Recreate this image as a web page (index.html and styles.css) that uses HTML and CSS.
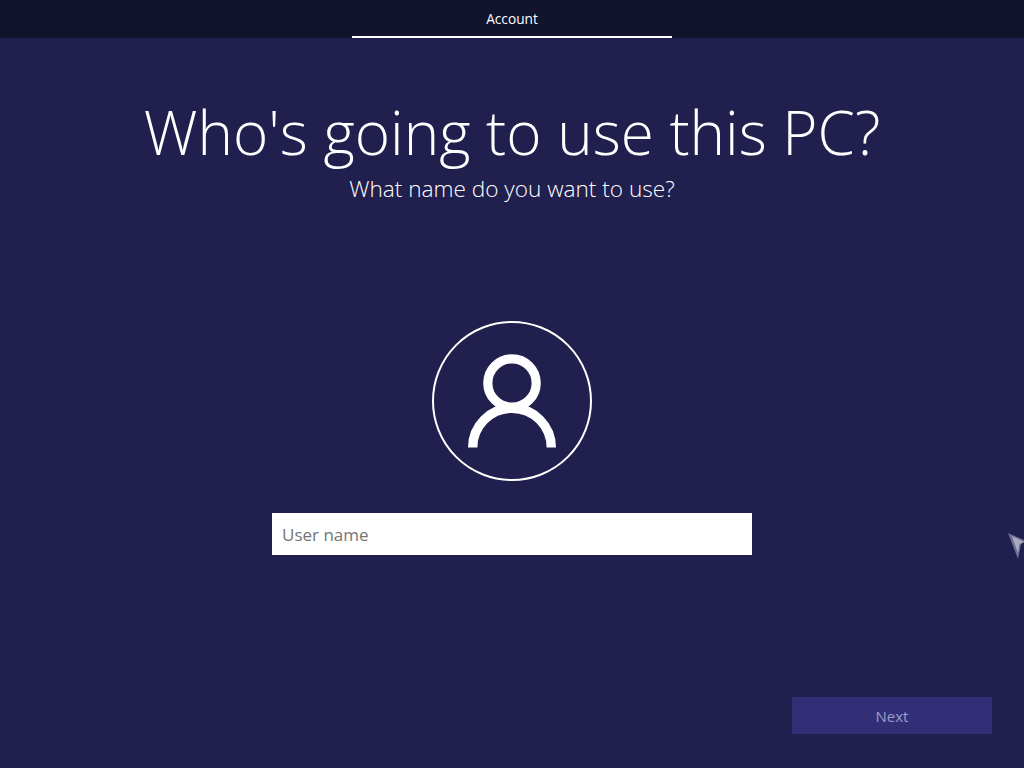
FILE: index.html
```html
<!DOCTYPE html>
<html lang="en">
<head>
<meta charset="utf-8">
<title>Account</title>
<link rel="stylesheet" href="styles.css">
</head>
<body>
<div class="screen">
  <header class="topbar"><div class="tab">Account</div></header>
  <main class="content">
    <h1 class="title">Who's going to use this PC?</h1>
    <p class="subtitle">What name do you want to use?</p>
    <div class="avatar">
      <svg class="avatar-icon" viewBox="0 0 160 160" width="160" height="160" fill="none" stroke="#fff">
        <circle cx="80" cy="80" r="79" stroke-width="2"/>
        <circle cx="80" cy="62" r="24.200" stroke-width="9.200"/>
        <path d="M40.700 126.500 A39.300 39.300 0 0 1 119.300 126.500" stroke-width="9.400"/>
      </svg>
    </div>
    <input class="name-input" type="text" placeholder="User name">
  </main>
  <footer class="actions"><button class="next" type="button">Next</button></footer>
  <svg class="cursor" viewBox="0 0 18 26" width="18" height="26">
    <path d="M0 0 L18 8 L13 11 L10 26 Z" fill="#6f7090"/>
    <path d="M4 3 L16 9 L11.500 11 L10 20 Z" fill="#a9aac2"/>
  </svg>
</div>
</body>
</html>
```
FILE: styles.css
```css
html, body { margin: 0; padding: 0; height: 100%; }
.screen {
  position: relative;
  height: 768px;
  overflow: hidden;
  display: flex;
  flex-direction: column;
  background: #201f4e;
  color: #fff;
  font-family: "Open Sans", "Noto Sans", sans-serif;
}
.topbar {
  flex: none;
  height: 38px;
  display: flex;
  justify-content: center;
  background: #12132d;
}
.tab {
  box-sizing: border-box;
  width: 320px;
  height: 38px;
  border-bottom: 2px solid #fff;
  text-align: center;
  font-size: 13.700px;
  font-weight: 500;
  line-height: 38px;
}
.content {
  flex: 1;
  display: flex;
  flex-direction: column;
  align-items: center;
}
.title {
  margin: 52px 0 0;
  font-size: 60.200px;
  font-weight: 300;
  line-height: 84px;
  white-space: nowrap;
}
.subtitle {
  margin: 0;
  font-size: 22.600px;
  font-weight: 300;
  line-height: 29px;
}
.avatar { margin-top: 118px; height: 160px; }
.avatar-icon { display: block; }
.name-input {
  box-sizing: border-box;
  display: block;
  width: 480px;
  height: 42px;
  margin-top: 32px;
  padding: 0 10px;
  border: 0;
  border-radius: 0;
  background: #fff;
  font-family: inherit;
  font-size: 17px;
  color: #333;
}
.name-input::placeholder { color: #757575; opacity: 1; }
.actions {
  flex: none;
  display: flex;
  justify-content: flex-end;
  padding: 0 32px 34px 0;
}
.next {
  width: 200px;
  height: 37px;
  border: 0;
  background: #322f77;
  color: #9d9cc6;
  font-family: inherit;
  font-size: 15px;
}
.cursor {
  position: absolute;
  left: 1008px;
  top: 533px;
}
```
